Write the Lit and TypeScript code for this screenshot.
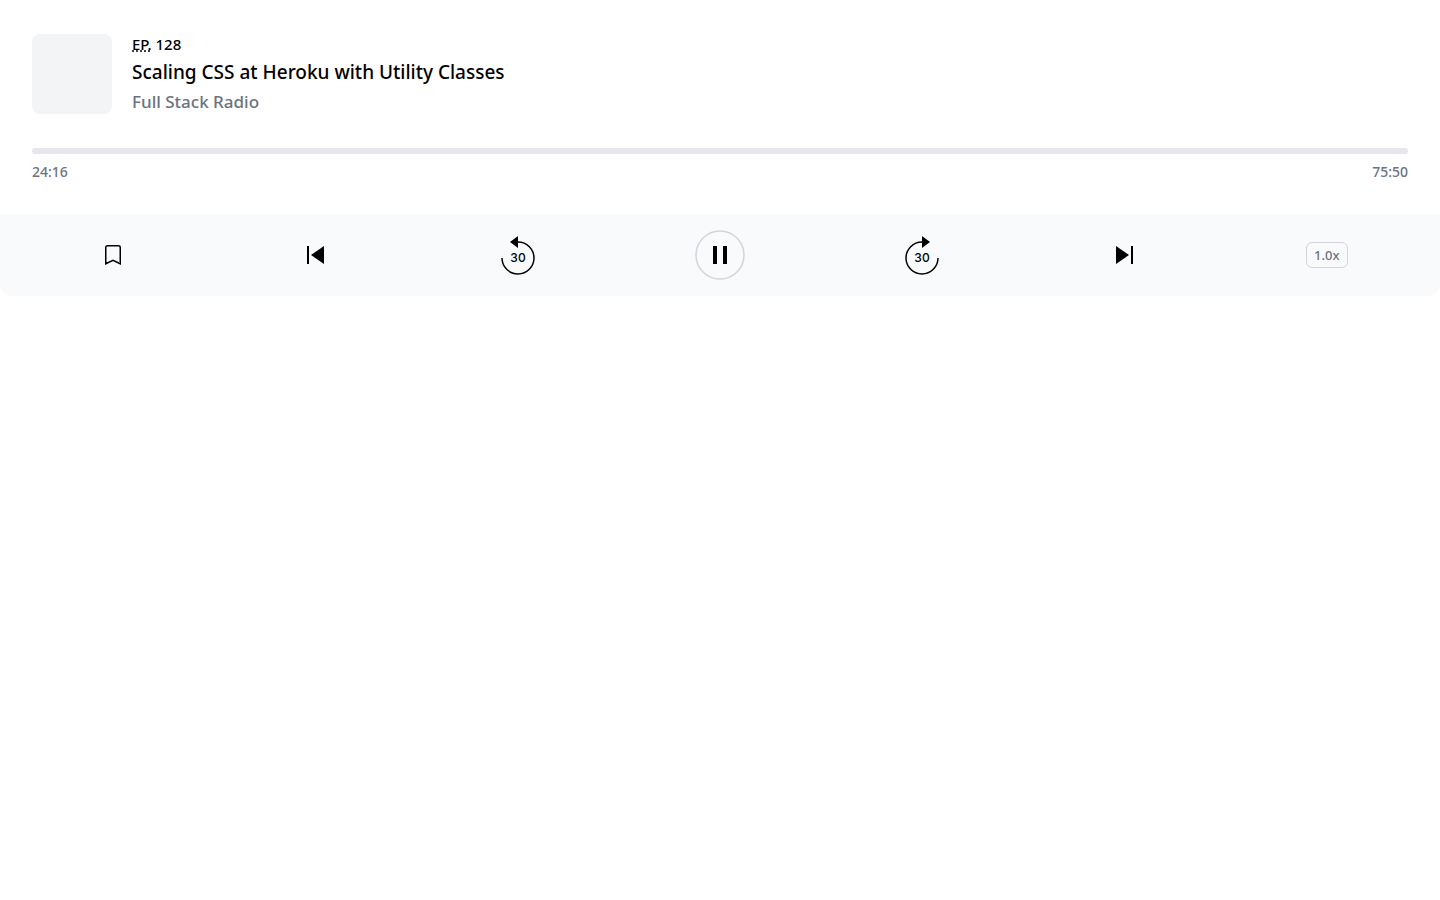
import { LitElement, html, css } from "lit";
import { customElement } from "lit/decorators.js";

@customElement("app-root")
export class AppRoot extends LitElement {
  static styles = css`
    :host {
      display: block;
      font-family: "Noto Sans", "Open Sans", sans-serif;
      font-weight: 500;
      color: #000;
      background: #fff;
    }
    .info {
      display: flex;
      flex-direction: column;
      gap: 32px;
      padding: 32px;
    }
    .track {
      display: flex;
      align-items: center;
      gap: 20px;
    }
    .cover {
      flex: none;
      width: 80px;
      height: 80px;
      border-radius: 8px;
      background: #f3f4f6;
    }
    .titles {
      display: flex;
      flex-direction: column;
      gap: 2px;
      min-width: 0;
    }
    .titles > * {
      margin: 0;
      font-weight: 500;
    }
    .episode {
      font-size: 15px;
      line-height: 24px;
      text-transform: uppercase;
    }
    .episode abbr {
      text-decoration: underline dotted;
    }
    .title {
      font-size: 19px;
      line-height: 28px;
    }
    .show {
      font-size: 17px;
      line-height: 28px;
      color: #6b7280;
    }
    .progress {
      display: flex;
      flex-direction: column;
      gap: 8px;
    }
    .bar {
      height: 6px;
      border-radius: 3px;
      background: #e5e7eb;
    }
    .times {
      display: flex;
      justify-content: space-between;
      font-size: 14px;
      line-height: 20px;
      color: #6b7280;
    }
    .controls {
      display: grid;
      grid-template-columns: repeat(7, 1fr);
      align-items: center;
      justify-items: center;
      padding: 16px 12px;
      border-radius: 0 0 12px 12px;
      background: #f9fafb;
    }
    button {
      display: block;
      margin: 0;
      padding: 0;
      border: 0;
      background: none;
      color: inherit;
      font: inherit;
      cursor: pointer;
    }
    svg {
      display: block;
    }
    .seconds {
      font: 500 12px "Inter", sans-serif;
      text-anchor: middle;
    }
    .speed {
      padding: 0 7px;
      border: 1px solid #d1d5db;
      border-radius: 6px;
      font-size: 13px;
      line-height: 24px;
      color: #6b7280;
    }
  `;

  render() {
    return html`
      <section class="info">
        <div class="track">
          <div class="cover"></div>
          <div class="titles">
            <p class="episode"><abbr title="Episode">Ep.</abbr> 128</p>
            <h2 class="title">Scaling CSS at Heroku with Utility Classes</h2>
            <p class="show">Full Stack Radio</p>
          </div>
        </div>
        <div class="progress">
          <div class="bar" role="progressbar" aria-label="Playback position" aria-valuemin="0" aria-valuemax="4550" aria-valuenow="1456"></div>
          <div class="times"><span>24:16</span><span>75:50</span></div>
        </div>
      </section>
      <section class="controls">
        <button type="button" aria-label="Bookmark">
          <svg width="16" height="20" fill="none" stroke="currentColor" stroke-width="1.5">
            <path d="M.75 2.5A1.75 1.75 0 0 1 2.5.75h11a1.75 1.75 0 0 1 1.75 1.75v16.3L8 15.4.75 18.8V2.5z" />
          </svg>
        </button>
        <button type="button" aria-label="Previous">
          <svg width="17" height="18" fill="currentColor"><path d="M0 0h2v18H0V0zM4 9l13-9v18L4 9z" /></svg>
        </button>
        <button type="button" aria-label="Rewind 30 seconds">
          <svg width="34" height="39" fill="none">
            <path d="M1 22c0 8.837 7.163 16 16 16s16-7.163 16-16S25.837 6 17 6" stroke="currentColor" stroke-width="1.5" />
            <path d="M17 0L9 6l8 6V0z" fill="currentColor" />
            <text class="seconds" x="17" y="26" fill="currentColor">30</text>
          </svg>
        </button>
        <button type="button" aria-label="Pause">
          <svg width="50" height="50" fill="none">
            <circle cx="25" cy="25" r="24" stroke="#d1d5db" stroke-width="1.5" />
            <path d="M18 16h4v18h-4V16zM28 16h4v18h-4V16z" fill="currentColor" />
          </svg>
        </button>
        <button type="button" aria-label="Skip 30 seconds">
          <svg width="34" height="39" fill="none">
            <path d="M33 22c0 8.837-7.163 16-16 16S1 30.837 1 22 8.163 6 17 6" stroke="currentColor" stroke-width="1.5" />
            <path d="M17 0l8 6-8 6V0z" fill="currentColor" />
            <text class="seconds" x="17" y="26" fill="currentColor">30</text>
          </svg>
        </button>
        <button type="button" aria-label="Next">
          <svg width="17" height="18" fill="currentColor"><path d="M17 0h-2v18h2V0zM13 9L0 0v18l13-9z" /></svg>
        </button>
        <button type="button" class="speed">1.0x</button>
      </section>
    `;
  }
}
